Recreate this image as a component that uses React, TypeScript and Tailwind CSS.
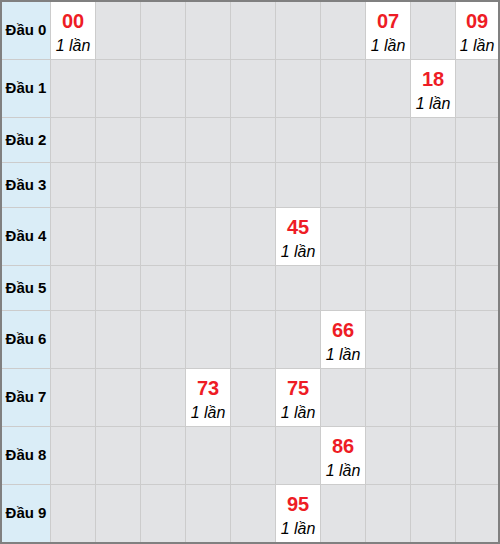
const HITS: Record<string, number> = {
  '00': 1,
  '07': 1,
  '09': 1,
  '18': 1,
  '45': 1,
  '66': 1,
  '73': 1,
  '75': 1,
  '86': 1,
  '95': 1,
}

export default function App() {
  return (
    <div className="w-[500px] h-[544px] border-2 border-[#808080] bg-[#cccccc] font-['Liberation_Sans',Arial,sans-serif]">
      <div className="grid grid-cols-[48px_repeat(9,44px)_42px] grid-rows-[57px_57px_44px_44px_57px_44px_57px_57px_57px_57px] gap-px">
        {Array.from({ length: 10 }).map((_, r) => (
          <>
            <div
              key={`h${r}`}
              className="flex items-center justify-center bg-[#daedf7] text-[15px] font-bold text-black"
            >
              Đầu {r}
            </div>
            {Array.from({ length: 10 }).map((_, c) => {
              const num = `${r}${c}`
              const hit = HITS[num]
              return hit ? (
                <div
                  key={num}
                  className="flex flex-col items-center pt-[5px] bg-white"
                >
                  <span className="text-[20px] font-bold leading-[28px] text-[#ee1c25]">
                    {num}
                  </span>
                  <span className="text-[16px] italic leading-[22px] text-black whitespace-nowrap">
                    {hit} lần
                  </span>
                </div>
              ) : (
                <div key={num} className="bg-[#e2e3e5]" />
              )
            })}
          </>
        ))}
      </div>
    </div>
  )
}
